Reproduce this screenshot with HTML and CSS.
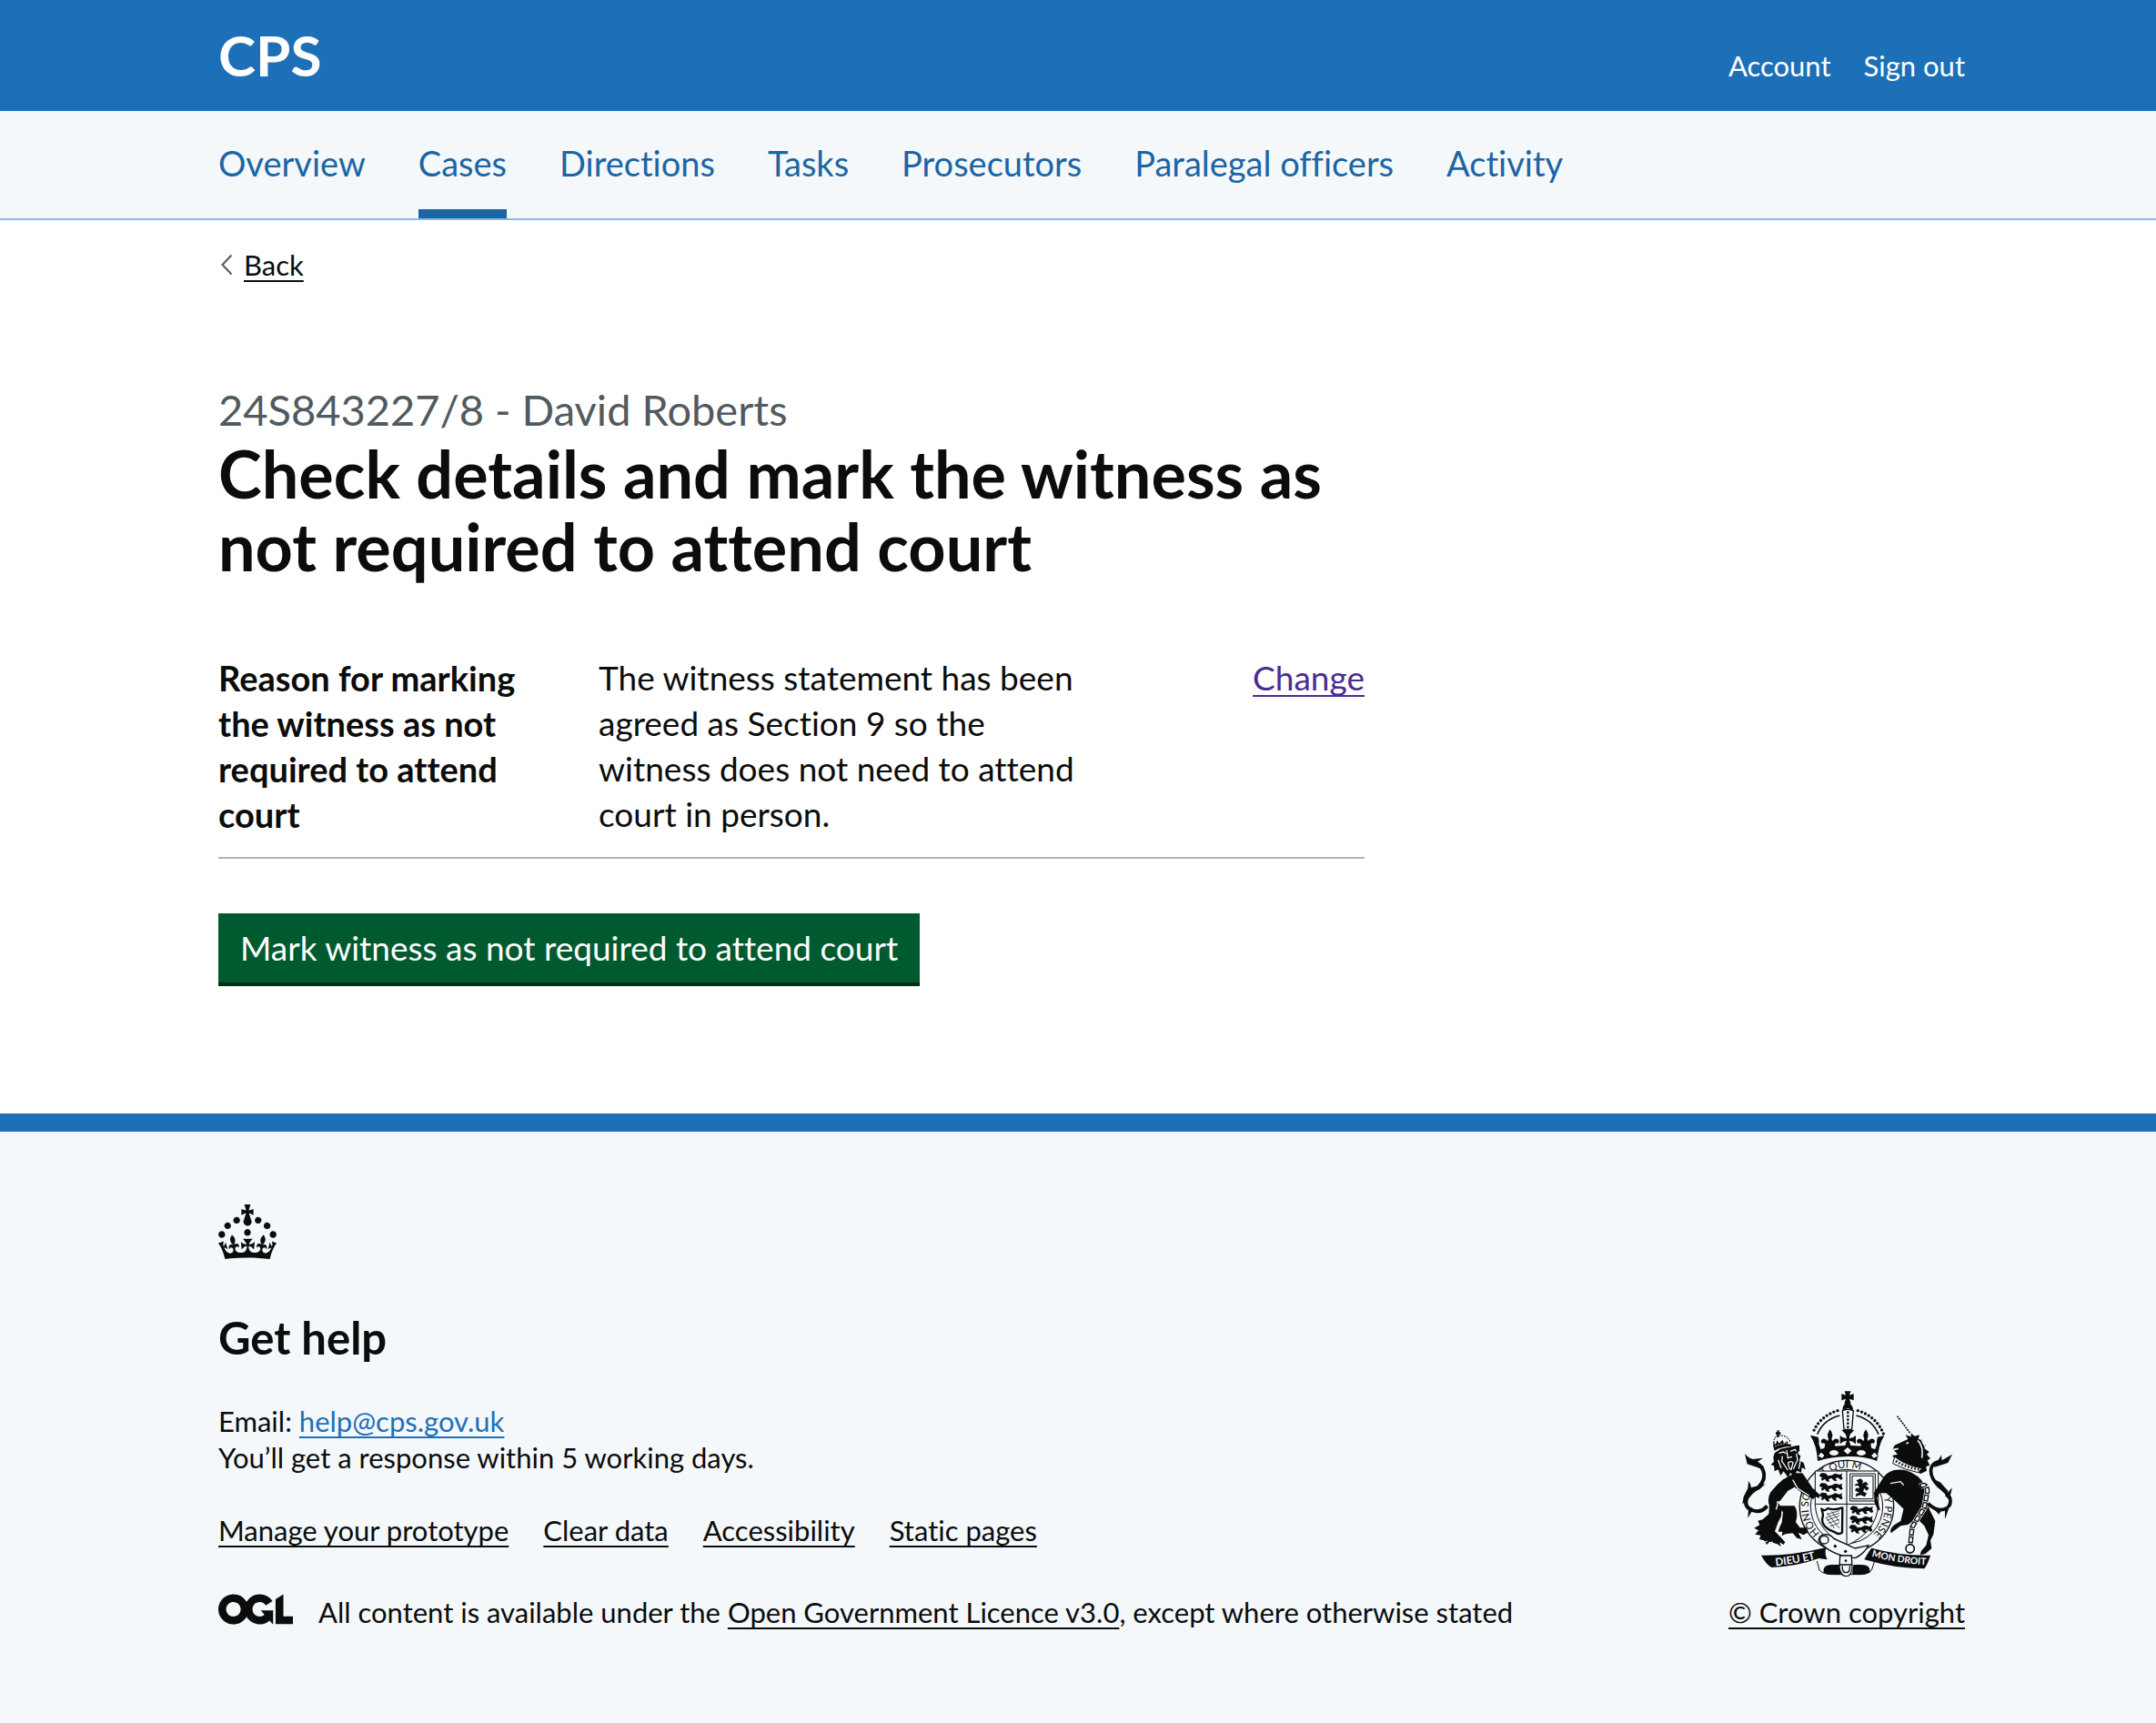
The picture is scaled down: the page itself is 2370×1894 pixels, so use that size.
FILE: index.html
```
<!DOCTYPE html>
<html lang="en">
<head>
<meta charset="utf-8">
<meta name="viewport" content="width=device-width, initial-scale=1">
<title>Check details and mark the witness as not required to attend court - CPS</title>
<link rel="stylesheet" href="styles.css">
</head>
<body>
<header class="header">
  <div class="container header-row">
    <a class="header-logo" href="#">CPS</a>
    <nav class="header-links" aria-label="Account">
      <a href="#">Account</a>
      <a href="#">Sign out</a>
    </nav>
  </div>
</header>

<nav class="primary-nav" aria-label="Primary">
  <ul class="container nav-list">
    <li><a class="nav-link" href="#">Overview</a></li>
    <li><a class="nav-link nav-link-current" href="#" aria-current="page">Cases</a></li>
    <li><a class="nav-link" href="#">Directions</a></li>
    <li><a class="nav-link" href="#">Tasks</a></li>
    <li><a class="nav-link" href="#">Prosecutors</a></li>
    <li><a class="nav-link" href="#">Paralegal officers</a></li>
    <li><a class="nav-link" href="#">Activity</a></li>
  </ul>
</nav>

<div class="page">
  <a class="back-link" href="#">
    <svg class="back-icon" viewBox="0 0 14 24" aria-hidden="true"><path d="M12.500 1.500 2.500 12l10 10.500" fill="none" stroke="#505a5f" stroke-width="2"/></svg>
    <span class="link">Back</span>
  </a>
  <main class="content">
    <span class="caption">24S843227/8 - David Roberts</span>
    <h1 class="heading">Check details and mark the witness as not required to attend court</h1>
    <dl class="summary">
      <div class="summary-row">
        <dt class="summary-key">Reason for marking the witness as not required to attend court</dt>
        <dd class="summary-value">The witness statement has been agreed as Section 9 so the witness does not need to attend court in person.</dd>
        <dd class="summary-action"><a class="link link-visited" href="#">Change</a></dd>
      </div>
    </dl>
    <button class="button" type="submit">Mark witness as not required to attend court</button>
  </main>
</div>

<footer class="footer">
  <div class="container">
    <svg class="footer-crown" viewBox="0 0 32 30" aria-hidden="true">
      <path fill="currentColor" fill-rule="evenodd" d="M22.600 10.400c-1 .4-2-.1-2.400-1-.4-.9.1-2 1-2.400.9-.4 2 .1 2.400 1s-.1 2-1 2.400m-5.900 6.700c-.9.4-2-.1-2.400-1-.4-.9.1-2 1-2.400.9-.4 2 .1 2.400 1s-.1 2-1 2.400m10.800-3.700c-1 .4-2-.1-2.400-1-.4-.9.1-2 1-2.400.9-.4 2 .1 2.400 1s0 2-1 2.400m3.300 4.800c-1 .4-2-.1-2.400-1-.4-.9.1-2 1-2.400.9-.4 2 .1 2.400 1s-.1 2-1 2.400M17 4.700l2.300 1.200V2.500l-2.300.7-.2-.2.9-3h-3.400l.9 3-.2.2c-.1.1-2.300-.7-2.300-.7v3.400L15 4.700c.1.1.1.2.2.2l-1.300 4c-.1.2-.1.4-.1.6 0 1.100.8 2 1.900 2.200h.7c1-.2 1.900-1.100 1.900-2.100 0-.2 0-.4-.1-.6l-1.300-4c-.1-.2 0-.2.1-.3m-7.600 5.700c.9.4 2-.1 2.400-1 .4-.9-.1-2-1-2.400-.9-.4-2 .1-2.400 1s0 2 1 2.400m-5 3c.9.4 2-.1 2.400-1 .4-.9-.1-2-1-2.400-.9-.4-2 .1-2.400 1s.1 2 1 2.400m-3.200 4.800c.9.4 2-.1 2.400-1 .4-.9-.1-2-1-2.400-.9-.4-2 .1-2.400 1s0 2 1 2.400m14.800 11c4.400 0 8.600.3 12.300.8 1.100-4.500 2.400-7 3.700-8.800l-2.500-.9c.2 1.300.3 1.900 0 2.700-.4-.4-.8-1.100-1.100-2.300l-1.200 4c.7-.5 1.300-.8 2-.9-1.100 2.500-2.600 3.100-3.500 3-1.100-.2-1.700-1.200-1.500-2.100.3-1.200 1.500-1.500 2.100-.1 1.100-2.300-.8-3-2-2.300 1.900-1.900 2.100-3.500.6-5.600-2.100 1.600-2.100 3.200-1.200 5.500-1.200-1.400-3.200-.6-2.500 1.600.9-1.400 2.100-.5 1.900.8-.2 1.100-1.700 2.100-3.500 1.900-2.700-.2-2.900-2.100-2.900-3.600.7-.1 1.900.5 2.900 1.900l.4-4.300c-1.100 1.100-2.100 1.400-3.200 1.400.4-1.200 2.100-3 2.100-3h-5.400s1.700 1.900 2.100 3c-1.100 0-2.100-.2-3.200-1.400l.4 4.300c1-1.400 2.200-2 2.900-1.900-.1 1.500-.2 3.400-2.900 3.600-1.900.2-3.400-.8-3.500-1.900-.2-1.300 1-2.200 1.900-.8.7-2.300-1.200-3-2.500-1.600.9-2.200.9-3.900-1.200-5.500-1.500 2-1.300 3.700.6 5.600-1.200-.7-3.100 0-2 2.300.6-1.400 1.800-1.100 2.100.1.2.9-.3 1.900-1.500 2.100-.9.2-2.400-.5-3.500-3 .6 0 1.200.3 2 .9l-1.200-4c-.3 1.100-.7 1.900-1.100 2.300-.3-.8-.2-1.400 0-2.700l-2.900.9C1.300 23 2.600 25.500 3.700 30c3.700-.5 7.900-.8 12.300-.8"/>
    </svg>
    <div class="footer-row">
      <div class="footer-main">
        <h2 class="footer-heading">Get help</h2>
        <p class="footer-text">Email: <a class="link link-email" href="mailto:help@cps.gov.uk">help@cps.gov.uk</a><br>You’ll get a response within 5 working days.</p>
        <ul class="footer-links">
          <li><a class="link" href="#">Manage your prototype</a></li>
          <li><a class="link" href="#">Clear data</a></li>
          <li><a class="link" href="#">Accessibility</a></li>
          <li><a class="link" href="#">Static pages</a></li>
        </ul>
        <div class="licence">
          <svg class="licence-logo" viewBox="0 0 483.200 195.700" role="img" aria-label="Open Government Licence"><path fill="currentColor" d="M421.500 142.800V.1l-50.700 32.300v161.100h112.400v-50.700zm-122.300-9.600A47.120 47.120 0 0 1 221 97.800c0-26 21.100-47.100 47.100-47.100 16.700 0 31.400 8.700 39.700 21.800l42.700-27.200A97.630 97.630 0 0 0 268.100 0c-36.500 0-68.300 20.100-85.100 49.700A98 98 0 0 0 97.800 0C43.900 0 0 43.900 0 97.800s43.900 97.800 97.800 97.800c36.500 0 68.300-20.100 85.100-49.700a97.760 97.760 0 0 0 149.600 25.400l19.400 22.200h3v-87.800h-80l24.300 27.500zM97.800 145c-26 0-47.100-21.100-47.100-47.100s21.100-47.100 47.100-47.100 47.100 21.100 47.100 47.100S123.800 145 97.800 145"/></svg>
          <span>All content is available under the <a class="link" href="#">Open Government Licence v3.0</a>, except where otherwise stated</span>
        </div>
      </div>
      <a class="copyright" href="#">
        <svg class="arms" viewBox="99 51 702 618" aria-hidden="true">
          <defs>
            <path id="motto-left" d="M361 527A126 127 0 0 1 341 374"/>
            <path id="motto-top" d="M362 347A126 127 0 0 1 548 358"/>
            <path id="motto-right" d="M570 398A126 127 0 0 1 470 563"/>
            <path id="scroll-left" d="M216 634Q290 626 362 607"/>
            <path id="scroll-right" d="M532 602Q610 624 704 630"/>
            <g id="passant">
              <path d="M360 334l8-7 14 2 5 8 13-2 12-6 14 4 10-4-3 8 4 10-7 3-8-7-9 2 5 9-10-1-8-9-10 5 4 8-11-2-5-8-9 6-4-7 6-3-9-3z"/>
            </g>
            <g id="fleur"><path d="M0-52q-13 18-5 31l-3 7q-9-12-19-5-6 7 1 13 8-4 10 4l-4 16h40l-4-16q2-8 10-4 7-6 1-13-10-7-19 5l-3-7q8-13-5-31z"/></g>
          </defs>
          <g fill="#0b0c0c">
            <!-- crown -->
            <path d="M443 58h20l-4 13 14-5v22l-14-5 5 17h-22l5-17-14 5V66l14 5z"/>
            <path d="M436 122q0-23 17-25 18 2 18 25l-17-8z"/>
            <path d="M436 122q18-8 36 0l-5 62h-26z" fill="#f4f8fb" stroke="#0b0c0c" stroke-width="4"/>
            <path d="M454 128v50" fill="none" stroke="#0b0c0c" stroke-width="8" stroke-dasharray="0 12" stroke-linecap="round"/>
            <path d="M420 122Q360 140 337 198M487 122q60 18 84 76" fill="none" stroke="#0b0c0c" stroke-width="10" stroke-dasharray="0 13" stroke-linecap="round"/>
            <path d="M353 200q20-48 74-62M555 200q-20-48-74-62" fill="none" stroke="#0b0c0c" stroke-width="5"/>
            <path d="M334 204l22 5q4 12 2 22l6 18q40-12 90-12t90 12l6-18q-2-10 2-22l22-5q-20 32-24 84-40-16-98-15-56 1-98 15-2-50-24-84z"/>
            <path d="M433 186h42l-14 14-3 14q14-2 22-10v28q-10-10-22-11l8 24h-24l8-24q-12 1-22 11v-28q8 8 22 10l-3-14z"/>
            <use href="#fleur" x="395" y="236"/><use href="#fleur" x="513" y="236"/>
            <g fill="#f4f8fb">
              <path d="M453 243l13 11-13 12-13-12z"/>
              <ellipse cx="408" cy="261" rx="15" ry="9"/><ellipse cx="498" cy="261" rx="15" ry="9"/>
              <path d="M366 258l12 12-9 10-15-8zM542 258l-12 12 9 10 15-8z" stroke="#0b0c0c" stroke-width="3"/>
            </g>

            <!-- garter -->
            <ellipse cx="450" cy="438" rx="155" ry="152" fill="#f4f8fb" stroke="#0b0c0c" stroke-width="4"/>
            <ellipse cx="450" cy="438" rx="119" ry="122" fill="none" stroke="#0b0c0c" stroke-width="3"/>
          </g>
          <g class="motto" fill="#0b0c0c">
            <text font-size="34"><textPath href="#motto-left">HONI SO</textPath></text>
            <text font-size="34"><textPath href="#motto-top" startOffset="14">T QUI M</textPath></text>
            <text font-size="34"><textPath href="#motto-right" startOffset="10">Y PENSE</textPath></text>
          </g>
          <g fill="#0b0c0c">
            <!-- shield -->
            <path d="M346 321h208v110q-4 90-104 136-100-46-104-136z" fill="#f4f8fb" stroke="#0b0c0c" stroke-width="3"/>
            <path d="M450 321v246M346 430h208" fill="none" stroke="#0b0c0c" stroke-width="3"/>
            <use href="#passant"/><use href="#passant" y="33"/><use href="#passant" y="65"/>
            <use href="#passant" x="101" y="109"/><use href="#passant" x="100" y="141"/><use href="#passant" x="98" y="171"/>
            <path d="M461 330h83v90h-83zM468 337h69v76h-69z" fill="none" stroke="#0b0c0c" stroke-width="3"/>
            <path d="M482 352l14-6 8 8-3 8 12-6 9 10-10 3 12 8-8 9-9-8-2 12 11 4-6 12-15-6-16 6 3-11 10-3-14-6 2-9 12 1-4-9-13 1 5-6 9-2z"/>
            <path d="M368 446q8 10 20-2 18 8 48-2l-1 82q-10 8-22 0l-22-10q-22-14-22-34 6-16-2-34z" fill="none" stroke="#0b0c0c" stroke-width="7" stroke-linejoin="round"/>
            <path d="M384 464l42-12M382 474l44-14M384 484l42-16M388 494l38-14M394 504l32-12M386 460l40 50M400 454l26 34M382 474l28 36" fill="none" stroke="#0b0c0c" stroke-width="2"/>

            <!-- lion -->
            <path d="M238 350l40-22 26 0 34 50 22 20 0 12-14-4-6 8-34-18-28-22-22 12-26 34-8 2 14 22-2 26-10 20-11 30 20 20 14 16-6 8-12-8 4 14-12-8-26-8-8 10-10-14-15-4 4-13-18-3 11-13-14-8 18-10-6-14 16-4 20-18 2-26q-8-24 4-46 20-26 43-44z"/>
            <path d="M226 436l52 0q14 22 4 54l14 18 22 0 6 14-16 10-18-8 12 22-16-4-14-16-24 3-12 6 2-14-14 0 6-18 6-12 4-34q-10-10-14-21z"/>
            <path d="M212 262l20-14 50-10 12-2 0 18-6 8 10 10-4 14 14 8 6 22-12-6-2 16-14-6-10 20-12-14-6 18-16-22-10 14-8-20-12 6-2-18-10-4 10-10-2-14z"/>
            <path d="M226 262l16-4 8 6M264 256l16-6 4 6M252 252l4 26 14-4M238 272l-2 16 20 30M284 264l4 20-14 30M257 294q10-8 16 0l-6 22q-8-2-10-22zM224 284l10 28M298 284l-6 30" fill="none" stroke="#f4f8fb" stroke-width="4"/>
            <path d="M210 228q0-24 18-24 24-2 36 20" fill="none" stroke="#0b0c0c" stroke-width="4" stroke-dasharray="4 4"/>
            <path d="M208 240l0-14 8 8 4-14 8 10 10-12 6 12 10-8 4 12 8-2 0 8q-30 0-54 14z"/>
            <path d="M214 240q24-10 50-12" fill="none" stroke="#f4f8fb" stroke-width="3" stroke-dasharray="5 4"/>
            <path d="M220 187h8l-2 6h6v7h-6v10h-6v-10h-4v-7h5z"/>
            <path d="M188 436q-22 26-50 14-28-10-18-38 12-22 40-38 26-28 14-56-8-18-26-24" fill="none" stroke="#0b0c0c" stroke-width="12"/>
            <path d="M164 312l-42-14-8-34q14 16 26 18l34-4-18 12 22 18zM106 430l4-24 14-28 2-24q10 14 8 22l48-12-20 18-34 14-12 26zM124 476l2-30 16 0z"/>
            <path d="M272 350l16 28 38 24M222 420q2 14-5 28M186 572l20-18M198 580l12-20M168 560l20-8" fill="none" stroke="#f4f8fb" stroke-width="4"/>

            <!-- unicorn -->
            <path d="M617 140l42 56" fill="none" stroke="#0b0c0c" stroke-width="5" stroke-dasharray="6 3"/>
            <path d="M602 248l6-12 26-12 18-8-8-14 18 6 0-12 12 10 16-4-4 14 16 2-4 10 14 8-6 10 16 12-8 8 12 14-10 6 8 16-12 4 2 14-20 10-20-10-40-10-24-10 4-14-14-16 18-4z"/>
            <path d="M646 230l8-3M602 251l18-4M684 220q20 18 14 58M694 212l20 38" fill="none" stroke="#f4f8fb" stroke-width="5"/>
            <path d="M608 274l-6 22q40 22 84 30l12-14q-50-8-90-38z" fill="#f4f8fb" stroke="#0b0c0c" stroke-width="3"/>
            <path d="M612 288q36 22 78 28" fill="none" stroke="#0b0c0c" stroke-width="8" stroke-dasharray="5 6"/>
            <path d="M566 350q12-24 40-32 24-4 44 2 40 14 56 46 6 24 2 44l16 40 18 36-6 44-10 20 4 26-20 18-18 4 4-14 16-18 8-34-14-30-24-24-14-12-30-20-36-34-22-18-22 0-8 16 10 38-6 4-12-26-2-34z"/>
            <path d="M640 436l40 0 0 42-28 20-24 4-32 24q-6-14 12-28l20-12z"/>
            <path d="M594 362l34-6 10 12" fill="none" stroke="#f4f8fb" stroke-width="4"/>
            <path d="M692 372q22-14 24 16l-10 54-22 34-18 30-6 56" fill="none" stroke="#f4f8fb" stroke-width="20"/>
            <path d="M692 372q22-14 24 16l-10 54-22 34-18 30-6 56" fill="none" stroke="#0b0c0c" stroke-width="16" stroke-dasharray="22 3"/>
            <path d="M692 372q22-14 24 16l-10 54-22 34-18 30-6 56" fill="none" stroke="#f4f8fb" stroke-width="8" stroke-dasharray="14 11" stroke-dashoffset="-4"/>
            <circle cx="659" cy="577" r="14" fill="none" stroke="#0b0c0c" stroke-width="5"/>
            <path d="M718 428q28 28 56 18 24-10 16-38-12-18-38-38-32-34-22-62 6-14 22-18" fill="none" stroke="#0b0c0c" stroke-width="11"/>
            <path d="M734 298q20-10 28-30l2 18 34-20-14 28-44 14zM798 376l-10 40-14-14zM742 350l16 8 26 28-4 16zM774 480l0-30 12-4zM730 438l34 10-10 16z"/>

            <!-- garter buckle -->
            <path d="M358 552q-2-20 20-22 18 0 30 14l70 32 44-10q-14 28-44 42-80-8-120-56z" fill="#f4f8fb" stroke="#0b0c0c" stroke-width="4"/>
            <ellipse cx="376" cy="548" rx="14" ry="13" fill="none" stroke="#0b0c0c" stroke-width="4"/>
            <circle cx="412" cy="569" r="5"/><circle cx="446" cy="586" r="5"/>
            <path d="M374 656q-4-26 26-26h26l4 32q-36 4-56-6zM526 656q4-26-26-26h-28l-4 32q36 4 58-6z"/>
            <path d="M352 618l8 30q14 14 40 14h96q24 0 36-14l10-30" fill="none" stroke="#0b0c0c" stroke-width="3"/>
            <path d="M428 600h38l2 42q-4 26-20 26t-22-26z" fill="#f4f8fb" stroke="#0b0c0c" stroke-width="4"/>
            <path d="M426 630h42M436 634q-2 22 12 22t12-22" fill="none" stroke="#0b0c0c" stroke-width="4"/>
            <circle cx="447" cy="617" r="4"/>

            <!-- motto scroll -->
            <path d="M168 599q100 2 214-26-6 22 4 40l-28-4q-70 26-156 30-18-10-34-40z"/>
            <path d="M726 599q-100 2-194-24-10 12-24 38l24 6q70 22 174 24 12-16 20-44z"/>
          </g>
          <g class="motto-scroll" fill="#f4f8fb">
            <text font-size="35"><textPath href="#scroll-left">DIEU ET</textPath></text>
            <text font-size="31"><textPath href="#scroll-right">MON DROIT</textPath></text>
          </g>
        </svg>
        <span class="link">© Crown copyright</span>
      </a>
    </div>
  </div>
</footer>
</body>
</html>
```
FILE: styles.css
```
* {
  box-sizing: border-box;
}

body {
  margin: 0;
  background: #f4f8fb;
  color: #0b0c0c;
  font-family: Lato, "Liberation Sans", Arial, sans-serif;
  font-size: 31px;
  font-variant-ligatures: no-common-ligatures;
  line-height: 40px;
}

h1, h2, p, ul, dl, dd {
  margin: 0;
  padding: 0;
}

ul {
  list-style: none;
}

.container {
  margin: 0 210px 0 240px;
}

.link {
  color: inherit;
  text-decoration: underline;
  text-decoration-thickness: 2px;
  text-underline-offset: 5px;
  text-decoration-skip-ink: none;
}

.link-visited {
  color: #4c2c92;
}

.link-email {
  color: #1d70b8;
}

/* Header */

.header {
  background: #1d70b8;
  padding: 30px 0;
}

.header-row {
  display: flex;
  justify-content: space-between;
  align-items: baseline;
}

.header a {
  color: #fff;
  text-decoration: none;
}

.header-logo {
  font-size: 62px;
  font-weight: 700;
  line-height: 60px;
}

.header-links {
  display: flex;
  gap: 36px;
}

.primary-nav {
  background: #f4f8fb;
  border-bottom: 2px solid #8eb8dc;
}

.nav-list {
  display: flex;
  gap: 58px;
}

.nav-link {
  display: block;
  padding: 32px 0 26px;
  border-bottom: 10px solid transparent;
  color: #1a65a6;
  font-size: 38px;
  line-height: 50px;
  text-decoration: none;
}

.nav-link-current {
  border-bottom-color: #1a65a6;
}

/* Page */

.page {
  padding: 29px 210px 140px 240px;
  background: #fff;
}

.back-link {
  display: inline-flex;
  align-items: center;
  gap: 12px;
  padding-left: 2px;
  color: inherit;
  text-decoration: none;
}

.back-icon {
  width: 14px;
  height: 24px;
}

.content {
  max-width: 1260px;
  padding-top: 109px;
}

.caption {
  display: block;
  color: #505a5f;
  font-size: 47px;
  line-height: 60px;
}

.heading {
  margin-bottom: 80px;
  font-size: 72px;
  line-height: 80px;
}

.summary {
  margin-bottom: 60px;
  font-size: 37px;
  line-height: 50px;
}

.summary-row {
  display: grid;
  grid-template-columns: 30% 42% 1fr;
  column-gap: 40px;
  padding-bottom: 22px;
  border-bottom: 2px solid #b1b4b6;
}

.summary-key {
  font-size: 38px;
  font-weight: 700;
}

.summary-action {
  text-align: right;
}

.button {
  display: block;
  margin: 0;
  padding: 13px 24px;
  border: 0;
  border-bottom: 4px solid #002d18;
  border-radius: 0;
  background: #005a30;
  color: #fff;
  font: inherit;
  font-size: 37px;
  line-height: 50px;
  cursor: pointer;
}

/* Footer */

.footer {
  padding: 80px 0 100px;
  border-top: 20px solid #1d70b8;
}

.footer-crown {
  display: block;
  width: 64px;
  height: 60px;
  margin-bottom: 56px;
}

.footer-row {
  display: flex;
  justify-content: space-between;
  align-items: flex-end;
}

.footer-heading {
  margin-bottom: 42px;
  font-size: 49px;
  line-height: 60px;
}

.footer-text {
  margin-bottom: 40px;
}

.footer-links {
  display: flex;
  gap: 38px;
  margin-bottom: 50px;
}

.licence {
  display: flex;
  gap: 28px;
}

.licence-logo {
  flex: none;
  width: 82px;
  height: 34px;
}

.copyright {
  display: flex;
  flex-direction: column;
  align-items: center;
  gap: 19px;
  color: inherit;
  text-decoration: none;
}

.arms {
  width: 234px;
  height: 206px;
}

.motto {
  font-weight: 400;
}

.motto-scroll {
  font-weight: 700;
}
```
